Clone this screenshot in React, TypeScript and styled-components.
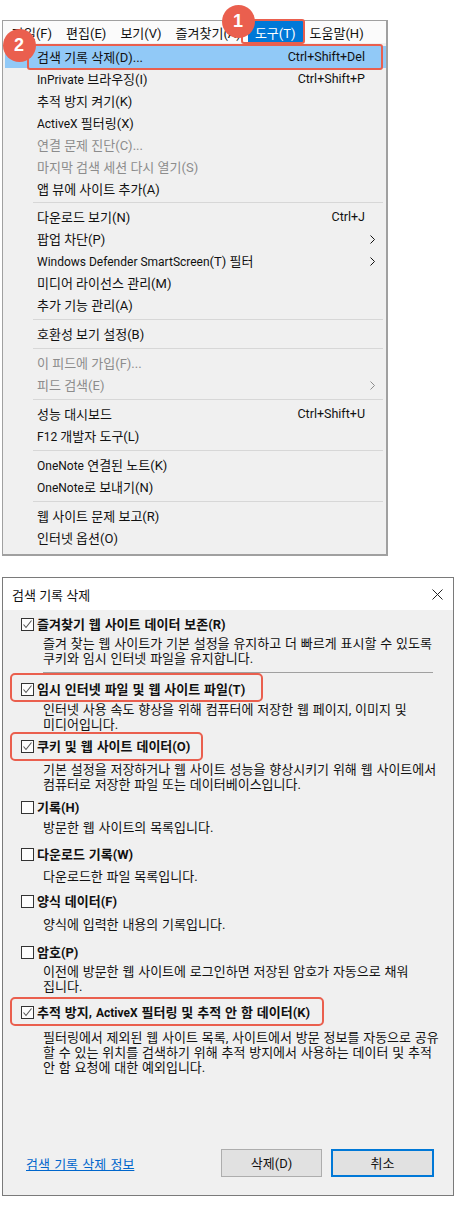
import styled, { createGlobalStyle } from 'styled-components';

const GlobalStyle = createGlobalStyle`
  html, body {
    margin: 0;
    padding: 0;
    background: #ffffff;
  }
  body {
    font-family: Roboto, "Noto Sans CJK KR", sans-serif;
    font-size: 13px;
    color: #111111;
  }
`;

const menuBar = ['파일(F)', '편집(E)', '보기(V)', '즐겨찾기(A)', '도구(T)', '도움말(H)'];

type MenuEntry = { label: string; shortcut?: string; disabled?: boolean; submenu?: boolean; active?: boolean };

const menuGroups: MenuEntry[][] = [
  [
    { label: '검색 기록 삭제(D)...', shortcut: 'Ctrl+Shift+Del', active: true },
    { label: 'InPrivate 브라우징(I)', shortcut: 'Ctrl+Shift+P' },
    { label: '추적 방지 켜기(K)' },
    { label: 'ActiveX 필터링(X)' },
    { label: '연결 문제 진단(C)...', disabled: true },
    { label: '마지막 검색 세션 다시 열기(S)', disabled: true },
    { label: '앱 뷰에 사이트 추가(A)' },
  ],
  [
    { label: '다운로드 보기(N)', shortcut: 'Ctrl+J' },
    { label: '팝업 차단(P)', submenu: true },
    { label: 'Windows Defender SmartScreen(T) 필터', submenu: true },
    { label: '미디어 라이선스 관리(M)' },
    { label: '추가 기능 관리(A)' },
  ],
  [{ label: '호환성 보기 설정(B)' }],
  [
    { label: '이 피드에 가입(F)...', disabled: true },
    { label: '피드 검색(E)', disabled: true, submenu: true },
  ],
  [
    { label: '성능 대시보드', shortcut: 'Ctrl+Shift+U' },
    { label: 'F12 개발자 도구(L)' },
  ],
  [
    { label: 'OneNote 연결된 노트(K)' },
    { label: 'OneNote로 보내기(N)' },
  ],
  [
    { label: '웹 사이트 문제 보고(R)' },
    { label: '인터넷 옵션(O)' },
  ],
];

type OptionEntry = {
  title: string;
  lines: string[];
  checked: boolean;
  top: number;
  descTop: number;
  ring?: number;
  ringTop?: number;
};

const options: OptionEntry[] = [
  {
    title: '즐겨찾기 웹 사이트 데이터 보존(R)',
    lines: ['즐겨 찾는 웹 사이트가 기본 설정을 유지하고 더 빠르게 표시할 수 있도록', '쿠키와 임시 인터넷 파일을 유지합니다.'],
    checked: true,
    top: 5,
    descTop: 3,
  },
  {
    title: '임시 인터넷 파일 및 웹 사이트 파일(T)',
    lines: ['인터넷 사용 속도 향상을 위해 컴퓨터에 저장한 웹 페이지, 이미지 및', '미디어입니다.'],
    checked: true,
    top: 7,
    descTop: 4,
    ring: 253,
    ringTop: -7,
  },
  {
    title: '쿠키 및 웹 사이트 데이터(O)',
    lines: ['기본 설정을 저장하거나 웹 사이트 성능을 향상시키기 위해 웹 사이트에서', '컴퓨터로 저장한 파일 또는 데이터베이스입니다.'],
    checked: true,
    top: 5,
    descTop: 7,
    ring: 193,
    ringTop: -5,
  },
  { title: '기록(H)', lines: ['방문한 웹 사이트의 목록입니다.'], checked: false, top: 6, descTop: 4 },
  { title: '다운로드 기록(W)', lines: ['다운로드한 파일 목록입니다.'], checked: false, top: 10, descTop: 6 },
  { title: '양식 데이터(F)', lines: ['양식에 입력한 내용의 기록입니다.'], checked: false, top: 8, descTop: 7 },
  {
    title: '암호(P)',
    lines: ['이전에 방문한 웹 사이트에 로그인하면 저장된 암호가 자동으로 채워', '집니다.'],
    checked: false,
    top: 11,
    descTop: 3,
  },
  {
    title: '추적 방지, ActiveX 필터링 및 추적 안 함 데이터(K)',
    lines: ['필터링에서 제외된 웹 사이트 목록, 사이트에서 방문 정보를 자동으로 공유', '할 수 있는 위치를 검색하기 위해 추적 방지에서 사용하는 데이터 및 추적', '안 함 요청에 대한 예외입니다.'],
    checked: true,
    top: 9,
    descTop: 9,
    ring: 314,
    ringTop: -6,
  },
];

// latin words run narrower than the hangul next to them
const MixedText = ({ text }: { text: string }) => (
  <>
    {text.split(/([A-Za-z0-9][A-Za-z0-9 ]*[A-Za-z0-9])/).map((part, index) =>
      index % 2 === 1 ? <Latin key={index}>{part}</Latin> : part,
    )}
  </>
);

const App = () => {
  return (
    <Page>
      <GlobalStyle />
      <MenuWindow>
        <MenuBar>
          {menuBar.map((item) => (
            <MenuBarItem key={item} $selected={item === '도구(T)'}>
              {item}
            </MenuBarItem>
          ))}
        </MenuBar>
        <MenuPanel>
          {menuGroups.map((group, index) => (
            <div key={index}>
              {index > 0 && <MenuSeparator $first={index === 1} />}
              {group.map((entry) => (
                <MenuRow key={entry.label} $active={entry.active} $disabled={entry.disabled}>
                  <span>
                    <MixedText text={entry.label} />
                  </span>
                  {entry.shortcut && <Shortcut>{entry.shortcut}</Shortcut>}
                  {entry.submenu && (
                    <Chevron viewBox="0 0 5 9">
                      <path d="M0.5 0.5 L4.5 4.5 L0.5 8.5" fill="none" stroke="currentColor" strokeWidth="1" />
                    </Chevron>
                  )}
                </MenuRow>
              ))}
            </div>
          ))}
        </MenuPanel>
        <Badge $variant="one">1</Badge>
        <Badge $variant="two">2</Badge>
      </MenuWindow>

      <Dialog>
        <TitleBar>
          <span>검색 기록 삭제</span>
          <CloseIcon viewBox="0 0 11 11">
            <path d="M0.5 0.5 L10.5 10.5 M10.5 0.5 L0.5 10.5" fill="none" stroke="#222222" strokeWidth="1" />
          </CloseIcon>
        </TitleBar>
        <DialogBody>
          {options.map((option, index) => (
            <Option key={option.title}>
              {index === 1 && <OptionDivider />}
              <OptionHead $top={option.top} $ring={option.ring} $ringTop={option.ringTop}>
                <CheckBox>
                  {option.checked && (
                    <svg viewBox="0 0 11 11" width="11" height="11">
                      <path d="M1.5 5.5 L4 8.5 L9.5 1.5" fill="none" stroke="#555555" strokeWidth="1.1" />
                    </svg>
                  )}
                </CheckBox>
                <OptionTitle>
                  <MixedText text={option.title} />
                </OptionTitle>
              </OptionHead>
              <OptionText $top={option.descTop}>
                {option.lines.map((line) => (
                  <div key={line}>{line}</div>
                ))}
              </OptionText>
            </Option>
          ))}
          <DialogFooter>
            <HelpLink href="#">검색 기록 삭제 정보</HelpLink>
            <Buttons>
              <DialogButton>삭제(D)</DialogButton>
              <DialogButton $primary>취소</DialogButton>
            </Buttons>
          </DialogFooter>
        </DialogBody>
      </Dialog>
    </Page>
  );
};

const ringColor = '#ea5f4e';

const Latin = styled.span`
  font-size: 12px;
`;

const Page = styled.div`
  width: 459px;
  height: 1205px;
  padding: 20px 0 0 2px;
  box-sizing: border-box;
  overflow: hidden;
`;

const MenuWindow = styled.div`
  position: relative;
  width: 386px;
  height: 536px;
  box-sizing: border-box;
  border: 1px solid #a0a0a0;
  border-width: 1px 2px 2px 1px;
  background: #f0f0f0;
`;

const MenuBar = styled.div`
  display: flex;
  height: 22px;
  padding-left: 2px;
  background: #fbfbfb;
`;

const MenuBarItem = styled.div<{ $selected?: boolean }>`
  position: relative;
  flex: none;
  display: flex;
  align-items: center;
  padding: 0 7px;
  white-space: nowrap;
  color: ${(p) => (p.$selected ? '#ffffff' : '#111111')};
  background: ${(p) => (p.$selected ? '#0078d7' : 'transparent')};

  ${(p) =>
    p.$selected &&
    `
    &::after {
      content: '';
      position: absolute;
      inset: -2px -2px -1px -7px;
      border: 2px solid ${ringColor};
      border-radius: 3px;
    }
  `}
`;

const MenuPanel = styled.div`
  padding-top: 3px;
`;

const MenuRow = styled.div<{ $active?: boolean; $disabled?: boolean }>`
  position: relative;
  display: flex;
  align-items: center;
  box-sizing: border-box;
  height: 22px;
  margin-left: 2px;
  padding: 0 21px 2px 32px;
  color: ${(p) => (p.$disabled ? '#8c8c8c' : '#111111')};
  background: ${(p) => (p.$active ? '#91c9f7' : 'transparent')};

  ${(p) =>
    p.$active &&
    `
    &::after {
      content: '';
      position: absolute;
      inset: -2px 3px -2px 22px;
      border: 2px solid ${ringColor};
      border-radius: 3px;
    }
  `}
`;

const Shortcut = styled.span`
  margin-left: auto;
  font-size: 12.5px;
`;

const Chevron = styled.svg`
  position: absolute;
  right: 11px;
  top: 7px;
  width: 5px;
  height: 9px;
`;

const MenuSeparator = styled.div<{ $first?: boolean }>`
  height: 1px;
  margin: ${(p) => (p.$first ? '2px 3px 3px 30px' : '3px 3px 3px 30px')};
  background: #d7d7d7;
`;

const Badge = styled.div<{ $variant: 'one' | 'two' }>`
  position: absolute;
  left: ${(p) => (p.$variant === 'one' ? '218.5px' : '-0.5px')};
  top: ${(p) => (p.$variant === 'one' ? '-16.5px' : '7.5px')};
  width: 33px;
  height: 33px;
  border-radius: 50%;
  display: flex;
  align-items: center;
  justify-content: center;
  background: ${ringColor};
  color: #ffffff;
  font-family: "Liberation Sans", sans-serif;
  font-size: 18px;
  font-weight: 700;
`;

const Dialog = styled.div`
  width: 452px;
  height: 619px;
  margin-top: 21px;
  box-sizing: border-box;
  border: 1px solid #7a7a7a;
  display: flex;
  flex-direction: column;
  background: #f0f0f0;
`;

const TitleBar = styled.div`
  display: flex;
  align-items: center;
  justify-content: space-between;
  height: 32px;
  flex: none;
  padding: 0 10px 0 9px;
  background: #ffffff;
`;

const CloseIcon = styled.svg`
  width: 11px;
  height: 11px;
`;

const DialogBody = styled.div`
  flex: 1;
  display: flex;
  flex-direction: column;
  padding: 0 18px 18px 18px;
`;

const Option = styled.div`
  position: relative;
`;

const OptionDivider = styled.div`
  width: 390px;
  height: 1px;
  margin: 6px 0 0 22px;
  background: #a0a0a0;
`;

const OptionHead = styled.div<{ $top: number; $ring?: number; $ringTop?: number }>`
  position: relative;
  display: flex;
  align-items: center;
  gap: 3px;
  height: 18px;
  margin-top: ${(p) => p.$top}px;

  ${(p) =>
    p.$ring &&
    `
    &::after {
      content: '';
      position: absolute;
      left: -11px;
      top: ${p.$ringTop}px;
      height: 29px;
      width: ${p.$ring}px;
      box-sizing: border-box;
      border: 2px solid ${ringColor};
      border-radius: 5px;
    }
  `}
`;

const CheckBox = styled.span`
  flex: none;
  box-sizing: border-box;
  width: 13px;
  height: 13px;
  border: 1px solid #333333;
  background: #fdfdfd;
  display: flex;
  align-items: center;
  justify-content: center;
  overflow: hidden;

  svg {
    flex: none;
  }
`;

const OptionTitle = styled.span`
  padding-bottom: 2px;
  font-weight: 700;
  word-spacing: 0.7px;
`;

const OptionText = styled.div<{ $top: number }>`
  margin-top: ${(p) => p.$top}px;
  padding-left: 22px;
  line-height: 15px;
  white-space: nowrap;
  word-spacing: 0.6px;
`;

const DialogFooter = styled.div`
  margin-top: auto;
  display: flex;
  align-items: center;
  justify-content: space-between;
  padding: 0 1px 0 5px;
`;

const HelpLink = styled.a`
  color: #0066cc;
  text-decoration: underline;
  word-spacing: 1px;
`;

const Buttons = styled.div`
  display: flex;
  gap: 9px;
`;

const DialogButton = styled.button<{ $primary?: boolean }>`
  width: ${(p) => (p.$primary ? '103px' : '101px')};
  height: 28px;
  padding: 0 0 2px;
  font: inherit;
  color: #111111;
  background: #e1e1e1;
  border: ${(p) => (p.$primary ? '2px solid #0078d7' : '1px solid #adadad')};
`;

export default App;
